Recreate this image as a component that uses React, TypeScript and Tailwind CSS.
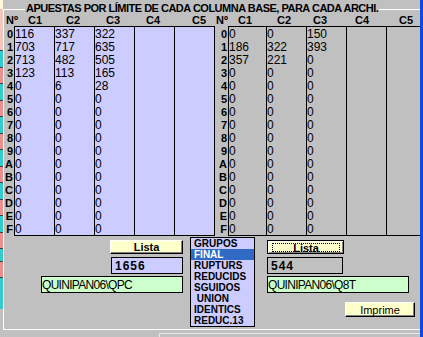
import React from 'react';

const labels = ['0', '1', '2', '3', '4', '5', '6', '7', '8', '9', 'A', 'B', 'C', 'D', 'E', 'F'];

const leftRows = [
  ['116', '337', '322'],
  ['703', '717', '635'],
  ['713', '482', '505'],
  ['123', '113', '165'],
  ['0', '6', '28'],
];

const rightRows = [
  ['0', '0', '150'],
  ['186', '322', '393'],
  ['357', '221', '0'],
];

const fill = (rows: string[][]) => labels.map((_, i) => rows[i] ?? ['0', '0', '0']);

const leftHeaders: [string, string][] = [
  ['Nº', 'w-[22px]'],
  ['C1', 'w-[38px]'],
  ['C2', 'w-[40px]'],
  ['C3', 'w-[40px]'],
  ['C4', 'w-[46px]'],
  ['C5', 'w-[20px]'],
];

const rightHeaders: [string, string][] = [
  ['Nº', 'w-[22px]'],
  ['C1', 'w-[39px]'],
  ['C2', 'w-[36px]'],
  ['C3', 'w-[42px]'],
  ['C4', 'w-[44px]'],
  ['C5', 'w-[20px]'],
];

const listItems = ['GRUPOS', 'FINAL', 'RUPTURS', 'REDUCIDS', 'SGUIDOS', '\u00a0UNION', 'IDENTICS', 'REDUC.13'];

// colours of the window peeking out behind on the left
const strip = [
  'h-[9px] bg-[#fff8dc]',
  'h-[41px] bg-[#f4c6bc]',
  'h-px bg-[#404040]',
  'h-[16px] bg-[#33cccc]',
  'h-px bg-[#404040]',
  'h-[15px] bg-[#ee8e8e]',
  'h-px bg-[#404040]',
  'h-[16px] bg-[#33cccc]',
  'h-px bg-[#404040]',
  'h-[15px] bg-[#ee8e8e]',
  'h-px bg-[#404040]',
  'h-[16px] bg-[#33cccc]',
  'h-px bg-[#404040]',
  'h-[15px] bg-[#ee8e8e]',
  'h-px bg-[#404040]',
  'h-[16px] bg-[#33cccc]',
  'h-px bg-[#404040]',
  'h-[15px] bg-[#ee8e8e]',
  'h-px bg-[#404040]',
  'h-[16px] bg-[#33cccc]',
  'h-px bg-[#404040]',
  'h-[15px] bg-[#ee8e8e]',
  'h-px bg-[#404040]',
  'h-[16px] bg-[#33cccc]',
  'h-px bg-[#404040]',
  'h-[15px] bg-[#ee8e8e]',
  'h-px bg-[#404040]',
  'h-[12px] bg-[#33cccc]',
  'h-px bg-[#404040]',
  'h-[15px] bg-[#ee8e8e]',
  'h-px bg-[#404040]',
  'h-[31px] bg-[#33cccc]',
];

function Grid({
  headPad,
  headers,
  labelW,
  cols,
  rows,
  bodyClass,
}: {
  headPad: string;
  headers: [string, string][];
  labelW: string;
  cols: string[];
  rows: string[][];
  bodyClass: string;
}) {
  return (
    <div className="flex shrink-0 flex-col">
      <div className={`flex h-[12px] text-[11px] font-bold leading-[12px] ${headPad}`}>
        {headers.map(([t, w], i) => (
          <span key={i} className={`${w} shrink-0 whitespace-nowrap`}>
            {t}
          </span>
        ))}
      </div>
      <div className="flex">
        <div className={`${labelW} flex shrink-0 flex-col pt-px`}>
          {labels.map((l) => (
            <div key={l} className="h-[13px] pr-px text-right text-[11px] font-bold leading-[15px]">
              {l}
            </div>
          ))}
        </div>
        <div className={`flex shrink-0 border-y border-black ${bodyClass}`}>
          {cols.map((w, c) => (
            <div key={c} className={`${w} shrink-0 border-l border-black`}>
              {labels.map((l, r) => (
                <div key={l} className="h-[13px] text-[12px] leading-[15px]">
                  {rows[r][c] ?? ''}
                </div>
              ))}
            </div>
          ))}
        </div>
      </div>
    </div>
  );
}

export default function App() {
  return (
    <div className="flex h-[337px] w-[423px] overflow-hidden bg-[#c0c0c0] font-['Liberation_Sans',Arial,sans-serif] text-black">
      <div className="flex w-[3px] shrink-0 flex-col">
        {strip.map((s, i) => (
          <div key={i} className={s} />
        ))}
      </div>

      <div className="flex w-[417px] shrink-0 flex-col">
        {/* group box caption */}
        <div className="flex h-[14px] pt-[2px]">
          <div className="mt-[7px] h-[5px] w-[22px] border-l border-t border-white" />
          <div className="whitespace-nowrap px-px text-[11px] font-bold leading-[12px] tracking-[-0.5px]">
            APUESTAS POR LÍMITE DE CADA COLUMNA BASE, PARA CADA ARCHI.
          </div>
          <div className="mt-[7px] h-px flex-1 bg-white" />
        </div>

        <div className="flex h-[316px] flex-col overflow-hidden border-b border-l border-white">
          <div className="flex">
            <Grid
              headPad="pl-[2px]"
              headers={leftHeaders}
              labelW="w-[10px]"
              cols={['w-[40px]', 'w-[40px]', 'w-[40px]', 'w-[40px]', 'w-[40px]']}
              rows={fill(leftRows)}
              bodyClass="border-r bg-[#ccccff]"
            />
            <Grid
              headPad="pl-px"
              headers={rightHeaders}
              labelW="w-[13px]"
              cols={['w-[38px]', 'w-[40px]', 'w-[40px]', 'w-[40px]', 'w-[40px]']}
              rows={fill(rightRows)}
              bodyClass="bg-[#c0c0c0]"
            />
          </div>

          <div className="flex">
            {/* left file */}
            <div className="flex w-[179px] shrink-0 flex-col items-end pt-[4px]">
              <button className="flex h-[14px] w-[73px] items-center justify-center border-b border-l border-r border-t border-b-black border-l-white border-r-black border-t-white bg-[#ffffcc] text-[11px] font-bold leading-[12px] shadow-[inset_-1px_-1px_#808080]">
                Lista
              </button>
              <div className="mt-[3px] flex h-[17px] w-[72px] items-center border border-black bg-[#ccccff] pl-[3px] text-[12px] font-bold leading-[14px] tracking-[1px]">
                1656
              </div>
              <div className="mt-[2px] flex h-[17px] w-[142px] items-center border border-black bg-[#ccffcc] text-[12px] leading-[14px] tracking-[-0.7px]">
                QUINIPAN06\QPC
              </div>
            </div>

            {/* list of files */}
            <div className="ml-[7px] mt-px flex w-[65px] shrink-0 flex-col border border-black bg-[#ccccff]">
              {listItems.map((it) => (
                <div
                  key={it}
                  className={`h-[11px] whitespace-pre pl-[3px] text-[10px] font-bold leading-[11px] ${
                    it === 'FINAL' ? 'bg-[#316ac5] text-white' : ''
                  }`}
                >
                  {it}
                </div>
              ))}
            </div>

            {/* right file */}
            <div className="ml-[12px] flex shrink-0 flex-col pt-[4px]">
              <button className="flex h-[14px] w-[77px] border border-black bg-[#ffffcc] p-0">
                <span className="flex flex-1 self-stretch border-l border-t border-white px-[3px] py-px shadow-[inset_-1px_-1px_#808080]">
                  <span className="flex flex-1 items-center justify-center border border-dotted border-black text-[11px] font-bold leading-[8px]">
                    Lista
                  </span>
                </span>
              </button>
              <div className="mt-[3px] flex h-[17px] w-[76px] items-center border border-black pl-[3px] text-[12px] font-bold leading-[14px] tracking-[1px]">
                544
              </div>
              <div className="mt-[2px] flex h-[17px] w-[142px] items-center border border-black bg-[#ccffcc] text-[12px] leading-[14px] tracking-[-0.7px]">
                QUINIPAN06\Q8T
              </div>
              <button className="ml-[78px] mt-[9px] flex h-[15px] w-[70px] items-center justify-center border border-b-black border-l-white border-r-black border-t-white bg-[#ffffcc] text-[11px] leading-[12px] shadow-[inset_-1px_-1px_#808080]">
                Imprime
              </button>
            </div>
          </div>
        </div>

        <div className="flex flex-1 pt-[3px]">
          <div className="w-[156px] shrink-0" />
          <div className="flex-1 border-l border-t border-[#e8e8e8]" />
        </div>
      </div>

      <div className="w-[3px] shrink-0 bg-[#0a4ae6]" />
    </div>
  );
}
